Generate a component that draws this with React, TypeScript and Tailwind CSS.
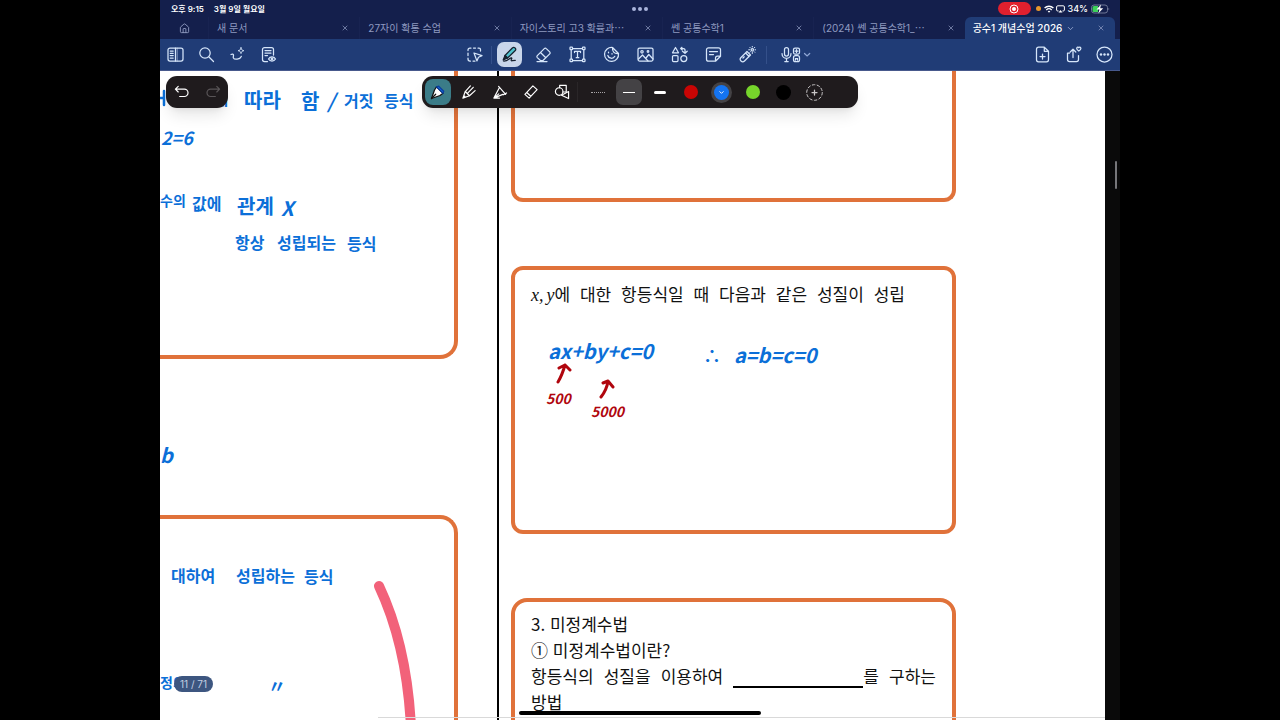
import React, { useState } from 'react';
import { ChevronDown, Home, X } from 'lucide-react';
import clsx from 'clsx';

interface Note {
  text: string;
  x: number;
  y: number;
  className: string;
}

const TABS = [
  { title: '새 문서', cut: false },
  { title: '27자이 확통 수업', cut: false },
  { title: '자이스토리 고3 확률과', cut: true },
  { title: '쎈 공통수학1', cut: false },
  { title: '(2024) 쎈 공통수학1_', cut: true },
  { title: '공수1 개념수업 2026', cut: false },
];

const BLUE = 'text-[#0b6fd8]';
const RED = 'text-[#b0060e]';

// Handwritten notes, placed freely on the page
const NOTES: Note[] = [
  { text: 'ㅔ', x: 56, y: 15, className: `${BLUE} text-base` },
  { text: '따라', x: 84, y: 15, className: `${BLUE} text-xl` },
  { text: '함', x: 141, y: 16, className: `${BLUE} text-xl` },
  { text: '/', x: 167, y: 17, className: `${BLUE} text-xl italic` },
  { text: '거짓', x: 184, y: 17, className: `${BLUE} text-base` },
  { text: '등식', x: 224, y: 17, className: `${BLUE} text-base` },
  { text: '2=6', x: 1, y: 52, className: `${BLUE} text-lg italic` },
  { text: '수의', x: 0, y: 119, className: `${BLUE} text-sm` },
  { text: '값에', x: 32, y: 120, className: `${BLUE} text-base` },
  { text: '관계', x: 77, y: 121, className: `${BLUE} text-xl` },
  { text: 'X', x: 121, y: 123, className: `${BLUE} text-xl italic` },
  { text: '항상', x: 75, y: 159, className: `${BLUE} text-base` },
  { text: '성립되는', x: 117, y: 159, className: `${BLUE} text-base` },
  { text: '등식', x: 187, y: 160, className: `${BLUE} text-base` },
  { text: 'b', x: 0, y: 370, className: `${BLUE} text-xl italic` },
  { text: '대하여', x: 11, y: 492, className: `${BLUE} text-base` },
  { text: '성립하는', x: 76, y: 492, className: `${BLUE} text-base` },
  { text: '등식', x: 144, y: 493, className: `${BLUE} text-base` },
  { text: '정의되는', x: 0, y: 601, className: `${BLUE} text-sm` },
  { text: '〃', x: 108, y: 600, className: `${BLUE} text-lg` },
  { text: 'ax+by+c=0', x: 388, y: 266, className: `${BLUE} text-xl italic` },
  { text: '∴', x: 543, y: 270, className: `${BLUE} text-lg` },
  { text: 'a=b=c=0', x: 574, y: 270, className: `${BLUE} text-xl italic` },
  { text: '500', x: 386, y: 317, className: `${RED} text-sm italic` },
  { text: '5000', x: 431, y: 330, className: `${RED} text-sm italic` },
];

function Icon({ size = 17, children }: { size?: number; children: React.ReactNode }) {
  return (
    <svg
      width={size}
      height={size}
      viewBox="0 0 17 17"
      fill="none"
      stroke="currentColor"
      strokeWidth="1.25"
      strokeLinecap="round"
      strokeLinejoin="round"
      aria-hidden="true"
    >
      {children}
    </svg>
  );
}

function ToolButton({
  label,
  className,
  children,
}: {
  label: string;
  className?: string;
  children: React.ReactNode;
}) {
  return (
    <button
      aria-label={label}
      className={clsx('flex h-full shrink-0 items-center justify-center', className)}
    >
      {children}
    </button>
  );
}

function StatusBar() {
  return (
    <div className="relative flex h-[17px] items-center justify-between pl-[11px] pr-[10px] text-white">
      <div className="flex gap-[10px] text-[8px] font-semibold">
        <span>오후 9:15</span>
        <span>3월 9일 월요일</span>
      </div>
      <div className="absolute inset-x-0 top-[7px] flex justify-center gap-[2px]">
        <i className="size-1 rounded-full bg-[#a9b4dc]" />
        <i className="size-1 rounded-full bg-[#a9b4dc]" />
        <i className="size-1 rounded-full bg-[#a9b4dc]" />
      </div>
      <div className="flex items-center">
        <span className="mr-[5px] flex h-[13px] w-[33px] items-center justify-center rounded-full bg-[#e0202e]">
          <svg width="10" height="10" viewBox="0 0 10 10" aria-hidden="true">
            <circle cx="5" cy="5" r="4" fill="none" stroke="#fff" />
            <circle cx="5" cy="5" r="2" fill="#fff" />
          </svg>
        </span>
        <i className="mr-[3px] size-[5px] rounded-full bg-[#e8982c]" />
        <svg width="10" height="8" viewBox="0 0 10 8" fill="none" stroke="#fff" strokeWidth="1.4" className="mr-[2px]" aria-hidden="true">
          <path d="M.6 3C3.100.6 6.900.6 9.400 3M2.300 4.900c1.500-1.400 3.900-1.400 5.400 0" />
          <path d="M3.700 6.200 5 7.800l1.300-1.600a2 2 0 0 0-2.600 0z" fill="#fff" stroke="none" />
        </svg>
        <svg width="9" height="8" viewBox="0 0 9 8" fill="none" stroke="#fff" className="mr-[3px]" aria-hidden="true">
          <path d="M2.500 6H1.800C1 6 .6 5.600.6 5V2C.6 1.200 1 .8 1.800.8h5.400c.8 0 1.200.4 1.200 1.200v3c0 .6-.4 1-1.200 1h-.7" />
          <path d="m4.500 5 2 2.500h-4z" fill="#fff" stroke="none" />
        </svg>
        <span className="mr-[3px] text-[9px] font-medium">34%</span>
        <svg width="19" height="10" viewBox="0 0 19 10" aria-hidden="true">
          <rect x=".5" y="1" width="16" height="8" rx="2.500" fill="none" stroke="#6d7696" />
          <path d="M3 2h4v6H3a1.500 1.500 0 0 1-1.500-1.500v-3A1.500 1.500 0 0 1 3 2z" fill="#3dd15a" />
          <path d="M17.500 3.700c1 .4 1 2.200 0 2.600z" fill="#6d7696" />
          <path d="M10 .5 5.500 5.600h3L7.300 9.500l4.900-5.300h-3z" fill="#fff" />
        </svg>
      </div>
    </div>
  );
}

function TabBar() {
  const [active, setActive] = useState(TABS.length - 1);

  return (
    <nav className="flex h-[22px] pr-[5px] text-[10px] text-[#8f9ac0]">
      <button aria-label="Home" className="flex w-12 shrink-0 items-center justify-center">
        <Home size={11} strokeWidth={2} />
      </button>
      {TABS.map((tab, i) => (
        <div
          key={tab.title}
          className={clsx(
            'flex min-w-0 flex-1 items-center justify-between pl-2 pr-[10px]',
            i === active ? 'rounded-t-md bg-[#203c76] text-white' : 'border-l border-[#182351]',
          )}
        >
          <button
            onClick={() => setActive(i)}
            className={clsx('flex items-center gap-1 whitespace-nowrap', i === active && 'font-medium')}
          >
            <span>
              {tab.title}
              {tab.cut && <span className="font-['Noto_Sans_CJK_KR']">…</span>}
            </span>
            {i === active && <ChevronDown size={9} className="text-[#a9b8de]" />}
          </button>
          <button aria-label="Close tab" className="text-[#9aa6cc]">
            <X size={8} strokeWidth={2} />
          </button>
        </div>
      ))}
    </nav>
  );
}

function MainToolbar() {
  return (
    <div className="grid h-[32px] grid-cols-[1fr_auto_1fr] border-b border-[#47598c] bg-[#203c76] text-[#d6e6fa]">
      <div className="flex">
        <ToolButton label="Sidebar" className="w-[31px]">
          <Icon>
            <rect x="1" y="2" width="15" height="13" rx="2" />
            <path d="M8.500 2v13M3.200 5h3M3.200 7.300h3M3.200 9.600h3M3.200 12h3" />
            <path d="M10.300 2v13" strokeOpacity=".4" />
          </Icon>
        </ToolButton>
        <ToolButton label="Search" className="w-[31px]">
          <Icon>
            <circle cx="7" cy="7" r="5.200" />
            <path d="m11 11 4.500 4.500" />
          </Icon>
        </ToolButton>
        <ToolButton label="AI pen" className="w-[31px]">
          <Icon>
            <path d="M2 8.500c1.300-.8 2.400-.6 2.500.6.1 1.100-.6 1.900-.1 2.900.9 1.800 6.600 1.700 7.900-1.600" />
            <path d="M12 1.800c.4 1.900.9 2.400 2.800 2.900-1.900.4-2.400.9-2.800 2.800-.4-1.900-.9-2.400-2.800-2.800 1.900-.5 2.400-1 2.800-2.900z" strokeWidth="1" />
          </Icon>
        </ToolButton>
        <ToolButton label="Read only" className="w-[31px]">
          <Icon>
            <path d="M7.500 15.500H4.500a2 2 0 0 1-2-2v-10a2 2 0 0 1 2-2h7a2 2 0 0 1 2 2V9M5 4.500h6M5 7h6M5 9.500h2.500" />
            <path d="M8.500 13c1.600-2.800 5.400-2.800 7 0-1.600 2.800-5.400 2.800-7 0z" />
            <circle cx="12" cy="13" r=".8" />
          </Icon>
        </ToolButton>
      </div>

      <div className="flex items-center">
        <ToolButton label="Lasso" className="w-[34px]">
          <Icon>
            <path d="M2 4.500V4a2 2 0 0 1 2-2h1M7.500 2h2M12 2h1a1.500 1.500 0 0 1 1.500 1.500V5M2 7v2.500M2 12v1a2 2 0 0 0 2 2h.5M7 15h2" />
            <path d="m8 7 8 2.600-3.500 1.700-1.600 3.600z" />
          </Icon>
        </ToolButton>
        <i className="h-[18px] w-px bg-[#34508a]" />
        <ToolButton label="Pen" className="w-[34px]">
          <span className="flex size-[25px] items-center justify-center rounded-[7px] bg-[#c9d6ea] text-[#16202e]">
            <Icon>
              <path d="m4 9.500 7.600-7.700a1.500 1.500 0 0 1 2.200 0l.5.500a1.500 1.500 0 0 1 0 2.200L6.500 12z" fill="#4fc0cc" />
              <path d="M4 9.500 2.200 14l4.300-2z" fill="#16202e" />
              <path d="M2.500 15c2.800.3 4.200-1 6.200-2.500 1.600-1.200 2.700-.7 1.800.6-.8 1.200-.2 1.900.8 1.600l3-.4" />
            </Icon>
          </span>
        </ToolButton>
        <ToolButton label="Eraser" className="w-[34px]">
          <Icon>
            <path d="M5.500 14.500 2.300 11.600a1.400 1.400 0 0 1 0-2l7-7a1.400 1.400 0 0 1 2 0l3.400 3.300a1.400 1.400 0 0 1 0 2L8 14.500zM5.500 6.500l5.300 5.300M2 15.500h10" />
          </Icon>
        </ToolButton>
        <ToolButton label="Text" className="w-[34px]">
          <Icon>
            <path d="M3.500 2.500h10M3.500 14.500h10M2.200 4v9M14.800 4v9M5.500 6.500V5.300h6v1.200M8.500 5.300v6.400M7.200 11.700h2.600" />
            <g fill="#203c76">
              <rect x="1" y="1.200" width="2.500" height="2.500" rx=".6" />
              <rect x="13.500" y="1.200" width="2.500" height="2.500" rx=".6" />
              <rect x="1" y="13.200" width="2.500" height="2.500" rx=".6" />
              <rect x="13.500" y="13.200" width="2.500" height="2.500" rx=".6" />
            </g>
          </Icon>
        </ToolButton>
        <ToolButton label="Sticker" className="w-[34px]">
          <Icon>
            <path d="M9.500 1.500a7 7 0 1 0 6 6zM9.500 1.500c-.4 3.800 1.500 6.500 6 6M4.800 9.500c.8 3.200 5.400 3.800 7 .8" />
            <path d="M5.500 6.200v.6" />
            <path d="M9 7.500v.5" />
          </Icon>
        </ToolButton>
        <ToolButton label="Image" className="w-[34px]">
          <Icon>
            <rect x="1" y="2" width="15" height="13" rx="1.500" />
            <circle cx="5" cy="5.800" r="1.200" />
            <circle cx="11" cy="5.500" r=".8" />
            <path d="m1.500 13 4-4 5.500 6M9 12l2.800-3.500L16 13" />
          </Icon>
        </ToolButton>
        <ToolButton label="Elements" className="w-[34px]">
          <Icon>
            <path d="m4.500 1.500 3 5.300h-6zM10 2.500h2.500a1.500 1.500 0 0 1 1.500 1.500v3M11.500 5.200 14 7.300l2.200-2.100M11 1.300 9.700 2.500 11 3.800" />
            <rect x="1.500" y="9.500" width="5.500" height="6" rx="1" />
            <circle cx="12.800" cy="12.500" r="3" />
          </Icon>
        </ToolButton>
        <ToolButton label="Memo" className="w-[34px]">
          <Icon>
            <path d="M10.500 15.200H3.500a2 2 0 0 1-2-2V3.800a2 2 0 0 1 2-2h10a2 2 0 0 1 2 2v6.400zM10.500 15.200v-3a2 2 0 0 1 2-2h3M4.500 5.500h8M4.500 8.500h4" />
          </Icon>
        </ToolButton>
        <ToolButton label="Laser pointer" className="w-[34px]">
          <Icon>
            <path d="m2 11.500 6-6 3.500 3.500-6 6a2.400 2.400 0 0 1-3.500-3.500zM6.600 7l3.500 3.500M4 12l1.200-1.200" />
            <path d="M13.300 0v1M13.300 6.500v1M9.700 3.800h1M16 3.800h1M10.800 1.300l.6.600M15.200 5.700l.6.600M15.800 1.300l-.6.600M10.800 6.300l.6-.6" strokeWidth="1" />
            <circle cx="13.300" cy="3.800" r="1.200" />
          </Icon>
        </ToolButton>
        <i className="mx-[2px] h-[18px] w-px bg-[#34508a]" />
        <ToolButton label="Record" className="w-[54px]">
          <svg width="30" height="17" viewBox="0 0 30 17" fill="none" stroke="currentColor" strokeWidth="1.250" strokeLinecap="round" aria-hidden="true">
            <rect x="3.500" y="1.500" width="4" height="8.500" rx="2" />
            <path d="M1 7.500c0 6.500 9 6.500 9 0M5.500 12.500v3M3.800 15.500h3.400" />
            <rect x="12.500" y="2" width="6" height="6" rx="1.500" />
            <path d="M14 5h3M15.500 3.500v3" />
            <rect x="12.500" y="9.700" width="6" height="6" rx="2" />
            <path d="M14.500 14v-1.500h2V14" />
            <path d="m23.500 7.500 2.600 2.500 2.600-2.500" stroke="#8fa6d4" />
          </svg>
        </ToolButton>
      </div>

      <div className="flex justify-end">
        <ToolButton label="Add page" className="w-[31px]">
          <Icon>
            <path d="M10.300 1.200H4.500a2 2 0 0 0-2 2v10.600a2 2 0 0 0 2 2h8a2 2 0 0 0 2-2V5.300zM10.300 1.200v4.100h4.200M8.500 8v5M6 10.500h5" />
          </Icon>
        </ToolButton>
        <ToolButton label="Share" className="w-[31px]">
          <Icon>
            <path d="M4.500 7H2.500v6.500a2 2 0 0 0 2 2h7a2 2 0 0 0 2-2V9.500M8 11.500V3.500M5.200 6 8 3.200 10.800 6" />
            <path d="M13.800 5c-4-2.500-1-5 0-3.200 1-1.800 4 .7 0 3.200z" />
          </Icon>
        </ToolButton>
        <ToolButton label="More" className="w-[31px]">
          <Icon>
            <circle cx="8.500" cy="8.500" r="7.500" />
            <g fill="currentColor" stroke="none">
              <circle cx="5" cy="8.500" r="1.200" />
              <circle cx="8.500" cy="8.500" r="1.200" />
              <circle cx="12" cy="8.500" r="1.200" />
            </g>
          </Icon>
        </ToolButton>
      </div>
    </div>
  );
}

function HistoryPill() {
  return (
    <div className="absolute left-[6px] top-[5px] flex h-8 rounded-[11px] bg-[#1f1b1d] text-white shadow-lg">
      <ToolButton label="Undo" className="w-[31px]">
        <Icon size={16}>
          <path d="M4.500 2.500 1.500 5.500l3 3M1.500 5.500h9.500a3.900 3.900 0 0 1 0 7.800H6" />
        </Icon>
      </ToolButton>
      <ToolButton label="Redo" className="w-[31px] text-[#595557]">
        <Icon size={16}>
          <path d="m12.500 2.500 3 3-3 3M15.500 5.500H6a3.900 3.900 0 0 0 0 7.800h5" />
        </Icon>
      </ToolButton>
    </div>
  );
}

function PenPill() {
  return (
    <div className="absolute left-1/2 top-[5px] flex h-8 -translate-x-1/2 items-center rounded-[11px] bg-[#1f1b1d] pr-7 text-white shadow-lg">
      <ToolButton label="Fountain pen" className="w-[31px]">
        <span className="flex size-[26px] items-center justify-center rounded-[8px] bg-[#3b7c88]">
          <Icon>
            <path d="M7.500 2.800 14 9.300l-3 2.200L2.500 14.500l3-8.500z" fill="#fff" stroke="#111" />
            <path d="m7.500 2.800 2.200-.6 5 5-.7 2.100z" fill="#1573f0" stroke="#0b3f9c" />
            <path d="m2.500 14.500 4.200-4.300" stroke="#111" />
          </Icon>
        </span>
      </ToolButton>
      <ToolButton label="Ball pen" className="w-[31px]">
        <Icon size={16}>
          <path d="M10 2 4.500 8 2 15l7-2.500 6-5.500M4.500 8l4.500 4.500M7.300 9.500 13 3.500M2 15l2-2" />
        </Icon>
      </ToolButton>
      <ToolButton label="Brush pen" className="w-[31px]">
        <Icon size={16}>
          <path d="m7 2.500 7.500 8.500M7.800 4 2 15l9.500-4M2 15l5.200-4.500M12 11.500l3.500-2M2 15h6" />
        </Icon>
      </ToolButton>
      <ToolButton label="Highlighter" className="w-[31px]">
        <Icon size={16}>
          <path d="m10.500 2 4.500 4-8.500 9L2 11zM4 9l4.300 4" />
        </Icon>
      </ToolButton>
      <ToolButton label="Shape pen" className="w-[31px]">
        <Icon size={16}>
          <path d="M6 4V1.500h7v7H9.500" />
          <circle cx="5.500" cy="8" r="4" />
          <path d="m8 12 7.500-4v7.500z" />
        </Icon>
      </ToolButton>
      <i className="mr-1 h-5 w-px bg-[#2a2628]" />
      <ToolButton label="Dotted line" className="w-[31px]">
        <i className="w-[14px] border-t border-dotted border-[#a8a5a7]" />
      </ToolButton>
      <ToolButton label="Thin line" className="w-[31px]">
        <span className="flex size-[26px] items-center justify-center rounded-[7px] bg-[#444245]">
          <i className="h-px w-3 bg-white" />
        </span>
      </ToolButton>
      <ToolButton label="Thick line" className="w-[31px]">
        <i className="h-[3px] w-3 rounded-sm bg-white" />
      </ToolButton>
      <ToolButton label="Red" className="w-[31px]">
        <i className="size-[14px] rounded-full bg-[#c90504]" />
      </ToolButton>
      <ToolButton label="Blue" className="w-[31px]">
        <span className="flex size-[21px] items-center justify-center rounded-full bg-[#444245]">
          <span className="flex size-[15px] items-center justify-center rounded-full bg-[#1474f2]">
            <ChevronDown size={7} strokeWidth={3} />
          </span>
        </span>
      </ToolButton>
      <ToolButton label="Green" className="w-[31px]">
        <i className="size-[14px] rounded-full bg-[#76d52b]" />
      </ToolButton>
      <ToolButton label="Black" className="w-[31px]">
        <i className="size-[15px] rounded-full bg-black" />
      </ToolButton>
      <ToolButton label="Add colour" className="w-[31px] text-[#c9c7c8]">
        <Icon>
          <circle cx="8.500" cy="8.500" r="7.800" strokeDasharray="2.600 2.300" strokeWidth="1" />
          <path d="M8.500 6v5M6 8.500h5" />
        </Icon>
      </ToolButton>
    </div>
  );
}

function Worksheet() {
  return (
    <div className="flex h-full font-['Noto_Sans_CJK_KR',sans-serif] text-[17px] leading-[26px] text-[#111]">
      <div className="flex w-[337px] shrink-0 flex-col gap-[156px] pr-[39px]">
        <section className="h-[288px] shrink-0 rounded-br-[18px] border-b-4 border-r-4 border-[#e0723a]" />
        <section className="h-[400px] shrink-0 rounded-tr-[18px] border-r-4 border-t-4 border-[#e0723a]" />
      </div>
      <div className="w-[2px] shrink-0 bg-black" />
      <div className="flex w-[457px] shrink-0 flex-col gap-16 pl-3">
        <section className="h-[131px] shrink-0 rounded-b-[12px] border-4 border-t-0 border-[#e0723a]" />
        <section className="h-[268px] shrink-0 rounded-[12px] border-4 border-[#e0723a] px-4 pt-[11px]">
          <p className="w-[374px] whitespace-nowrap [text-align-last:justify]">
            <span className="font-['Liberation_Serif'] text-lg leading-[26px] italic">x,&#8198;y</span>에 대한 항등식일 때 다음과 같은 성질이 성립
          </p>
        </section>
        <section className="h-[268px] shrink-0 rounded-[16px] border-4 border-[#e0723a] px-4 pt-[9px]">
          <h2>3. 미정계수법</h2>
          <h3>① 미정계수법이란?</h3>
          <p className="break-keep text-justify">
            항등식의 성질을 이용하여{' '}
            <span className="inline-block h-[6px] w-[130px] border-b-2 border-black align-text-bottom" />를 구하는 방법
          </p>
        </section>
      </div>
    </div>
  );
}

function InkLayer() {
  return (
    <div className="pointer-events-none absolute inset-0 font-['Noto_Sans_CJK_KR',sans-serif] leading-7">
      {NOTES.map((n, i) => (
        <span
          key={i}
          className={clsx('absolute whitespace-nowrap font-bold', n.className)}
          style={{ left: n.x, top: n.y }}
        >
          {n.text}
        </span>
      ))}
      <svg className="absolute left-0 top-[18px]" width="8" height="20" fill="none" stroke="#0b6fd8" strokeWidth="2.5" strokeLinecap="round" aria-hidden="true">
        <path d="M0 9h3M4 2v14" />
      </svg>
      <svg className="absolute left-[395px] top-[292px]" width="60" height="40" fill="none" stroke="#b0060e" strokeWidth="3" strokeLinecap="round" strokeLinejoin="round" aria-hidden="true">
        <path d="M3 19c3-5 5-10 7-17M4 5l6-3 5 5M46 34c4-5 6-9 7-16M48 20l5-2 5 6" />
      </svg>
      <svg className="absolute left-[212px] top-[506px]" width="48" height="150" fill="none" stroke="#f2627a" strokeWidth="10" strokeLinecap="round" aria-hidden="true">
        <path d="M7 9c17 36 29 82 32 141" />
      </svg>
    </div>
  );
}

export default function App() {
  return (
    <div className="flex h-screen justify-center bg-black">
      <div className="relative flex w-3/4 flex-col overflow-hidden font-[Inter,'Noto_Sans_CJK_KR',sans-serif]" lang="ko">
        <header className="shrink-0 bg-[#141f4c]">
          <StatusBar />
          <TabBar />
          <MainToolbar />
        </header>

        <main className="relative flex min-h-0 flex-1 bg-[#0a0a0a]">
          <div className="relative min-w-0 flex-1 overflow-hidden bg-white">
            <Worksheet />
            <InkLayer />
            <i className="absolute bottom-[2px] left-[218px] right-0 h-px bg-[#d9d9d9]" />
          </div>
          <div className="w-[15px] shrink-0 pl-[10px] pt-[90px]">
            <div className="h-7 w-[2px] rounded-full bg-[#77777a]" />
          </div>
          <HistoryPill />
          <PenPill />
          <span className="absolute bottom-7 left-[14px] flex h-4 items-center rounded-full bg-[#3d5680] px-[6px] text-[10px] text-[#c3cee2]">
            11 / 71
          </span>
          <i className="absolute bottom-[5px] left-1/2 h-1 w-[242px] -translate-x-1/2 rounded-full bg-black" />
        </main>
      </div>
    </div>
  );
}
